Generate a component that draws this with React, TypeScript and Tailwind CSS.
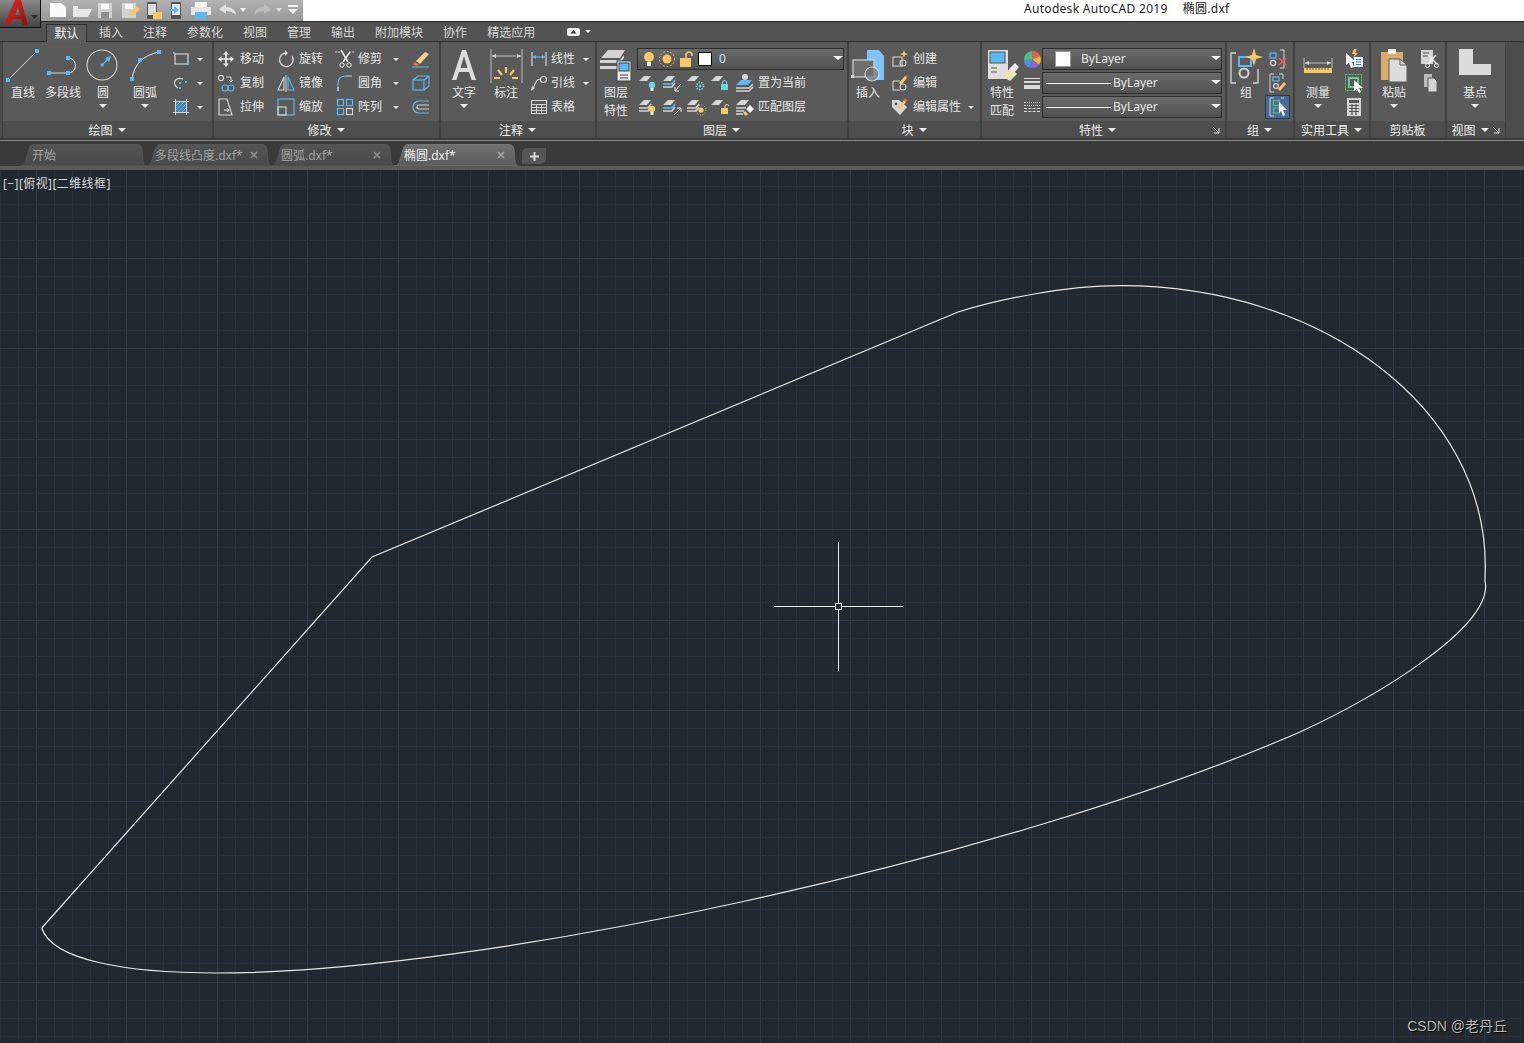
import type { ReactNode } from "react";

const BLUE = "#5cb8f0";
const GREY = "#d4d4d4";
const YEL = "#f7c86a";
const CYAN = "#6fd3dc";

function Caret({ className = "", size = "md" }: { className?: string; size?: "sm" | "md" | "lg" }) {
  const sizes = {
    sm: "border-x-[3px] border-t-[3px]",
    md: "border-x-[4px] border-t-[4px]",
    lg: "border-x-[5px] border-t-[4px]",
  };
  return <span className={`inline-block w-0 h-0 border-x-transparent border-t-[#f0f0f0] ${sizes[size]} ${className}`} />;
}

function Ico({ children, w = 20, h = 20 }: { children: ReactNode; w?: number; h?: number }) {
  return (
    <svg width={w} height={h} viewBox={`0 0 ${w} ${h}`} fill="none" className="shrink-0">
      {children}
    </svg>
  );
}

const Dot = ({ x, y, s = 3 }: { x: number; y: number; s?: number }) => <rect x={x - s / 2} y={y - s / 2} width={s} height={s} fill={BLUE} />;

// stack of grey sheets used by the layer icons
const Sheets = ({ n = 1, blue = false }: { n?: number; blue?: boolean }) => (
  <>
    <path d="M1 8 L6 3 H13 L9 8 Z" fill={GREY} />
    {n > 1 && <path d="M1 11 H10 L13 7" stroke={blue ? BLUE : GREY} strokeWidth="1.5" />}
    {n > 1 && <path d="M1 14 H10 L13 10" stroke={GREY} strokeWidth="1.5" />}
  </>
);

const Bulb = ({ c, x = 14, y = 12 }: { c: string; x?: number; y?: number }) => (
  <>
    <circle cx={x} cy={y} r="3.2" fill={c} />
    <rect x={x - 1.5} y={y + 3} width="3" height="3" fill="#e8e8e8" />
  </>
);

const Lock = ({ c, open = false, x = 11, y = 11 }: { c: string; open?: boolean; x?: number; y?: number }) => (
  <>
    <rect x={x} y={y} width="7" height="6" fill={c} />
    <path d={open ? `M${x + 4} ${y} V${y - 2} Q${x + 6} ${y - 5} ${x + 8} ${y - 2}` : `M${x + 1.5} ${y} V${y - 2} Q${x + 3.5} ${y - 5} ${x + 5.5} ${y - 2} V${y}`} stroke={c} strokeWidth="1.2" />
  </>
);

const icons: Record<string, ReactNode> = {
  rect: (
    <Ico>
      <rect x="4" y="5" width="13" height="10" stroke={GREY} strokeWidth="1.2" />
      <Dot x={3} y={4} s={2} />
      <Dot x={17} y={15} s={2} />
    </Ico>
  ),
  ell: (
    <Ico>
      <path d="M12 6 C6 4 2 8 4 12 Q5 14 7 15" stroke={GREY} strokeWidth="1.2" />
      <Dot x={9} y={10} s={2} />
      <Dot x={15} y={9} s={2} />
      <Dot x={9} y={15} s={2} />
    </Ico>
  ),
  hatch: (
    <Ico>
      <rect x="5" y="5" width="10" height="10" fill="#4b7fa8" />
      <path d="M5 9 L9 5 M5 13 L13 5 M7 15 L15 7 M11 15 L15 11" stroke={BLUE} strokeWidth="1" />
      <path d="M2 4.5 H18 M2 15.5 H18 M4.5 2 V18 M15.5 2 V18" stroke={GREY} strokeWidth="1" />
    </Ico>
  ),
  move: (
    <Ico>
      <path d="M10 3 V17 M3 10 H17" stroke="#f0f0f0" strokeWidth="1.6" />
      <path d="M10 2 L13 5.5 H7 Z M10 18 L13 14.5 H7 Z M2 10 L5.5 7 V13 Z M18 10 L14.5 7 V13 Z" fill="#f0f0f0" />
    </Ico>
  ),
  rotate: (
    <Ico>
      <path d="M11 4 A6.8 6.8 0 1 0 16 7" stroke={GREY} strokeWidth="1.4" />
      <path d="M12 1 L9 4 L12 7 Z" fill={GREY} transform="rotate(180 10.5 4)" />
    </Ico>
  ),
  trim: (
    <Ico>
      <path d="M0 3 H6 M14 3 H20" stroke={GREY} strokeDasharray="2 1" />
      <path d="M6 1 L13 13 M15 3 L8 13" stroke="#ececec" strokeWidth="1.5" />
      <circle cx="7" cy="16" r="2.2" stroke="#ececec" />
      <circle cx="14" cy="16" r="2.2" stroke="#ececec" />
    </Ico>
  ),
  eraser: (
    <Ico>
      <path d="M5 12 L14 3 L18 5 L9 15 Z" fill="#f6cf8f" />
      <path d="M4 13 L8 16 L5 17 L2 15 Z" fill="#ef6b5e" />
      <path d="M1 18 H18" stroke={BLUE} />
    </Ico>
  ),
  copy: (
    <Ico>
      <circle cx="5" cy="5" r="2.6" stroke={GREY} strokeWidth="1.1" />
      <circle cx="9" cy="15" r="3" stroke={BLUE} strokeWidth="1.1" />
      <circle cx="15" cy="15" r="3" stroke={BLUE} strokeWidth="1.1" />
      <path d="M10 4 H15 V9 M13 7 L15 9 L17 7" stroke={GREY} />
    </Ico>
  ),
  mirror: (
    <Ico>
      <path d="M8 4 L2 17 H8 Z" stroke={GREY} strokeWidth="1.1" />
      <path d="M10 2 V19" stroke={GREY} />
      <path d="M12 4 L18 17 H12 Z" stroke={BLUE} strokeWidth="1.1" />
    </Ico>
  ),
  fillet: (
    <Ico>
      <path d="M3 18 V10 Q3 3 11 3" stroke={BLUE} strokeWidth="1.2" />
      <path d="M3 18 V14 M11 3 H17" stroke={GREY} strokeWidth="1.2" />
    </Ico>
  ),
  box3d: (
    <Ico>
      <rect x="2" y="7" width="11" height="10" stroke={BLUE} strokeWidth="1.2" />
      <path d="M2 7 L7 3 H18 V13 L13 17 M13 7 L18 3" stroke={BLUE} strokeWidth="1.2" />
    </Ico>
  ),
  stretch: (
    <Ico>
      <path d="M3 2 H11 L16 18 H3 Z" stroke={GREY} strokeWidth="1.2" />
      <path d="M8 13 H13 M11 11 L13 13 L11 15" stroke="#f0f0f0" />
    </Ico>
  ),
  scale: (
    <Ico>
      <rect x="2" y="2" width="16" height="16" stroke={BLUE} strokeWidth="1.2" />
      <rect x="2" y="10" width="8" height="8" stroke={GREY} strokeWidth="1.2" />
    </Ico>
  ),
  array: (
    <Ico>
      <rect x="2.5" y="2.5" width="6" height="6" stroke={BLUE} strokeWidth="1.2" />
      <rect x="11.5" y="2.5" width="6" height="6" stroke={BLUE} strokeWidth="1.2" />
      <rect x="2.5" y="11.5" width="6" height="6" stroke={BLUE} strokeWidth="1.2" />
      <rect x="11.5" y="11.5" width="6" height="6" stroke={GREY} strokeWidth="1.2" />
    </Ico>
  ),
  offset: (
    <Ico>
      <path d="M18 4 H8 A6 6 0 0 0 8 16 H18" stroke={BLUE} strokeWidth="1.2" />
      <path d="M18 8 H8 A2 2 0 0 0 8 12 H18" stroke={GREY} strokeWidth="1.2" />
    </Ico>
  ),
  linear: (
    <Ico>
      <path d="M3 3 V17 M17 3 V17" stroke={GREY} strokeWidth="1.2" />
      <path d="M4 8 H16" stroke={BLUE} strokeWidth="1.2" />
      <path d="M4 8 L7 6 V10 Z M16 8 L13 6 V10 Z" fill={BLUE} />
    </Ico>
  ),
  leader: (
    <Ico>
      <path d="M3 17 L7 9 Q9 5 12 7" stroke={GREY} strokeWidth="1.2" />
      <circle cx="14.5" cy="6.5" r="3" stroke={GREY} strokeWidth="1.2" />
      <path d="M2 18 L3 13 L6 15 Z" fill={GREY} />
    </Ico>
  ),
  table: (
    <Ico>
      <rect x="2.5" y="3.5" width="15" height="13" stroke={GREY} />
      <path d="M2.5 7.5 H17.5 M2.5 10.5 H17.5 M2.5 13.5 H17.5 M7.5 7.5 V16.5 M12.5 7.5 V16.5" stroke={GREY} />
    </Ico>
  ),
  create: (
    <Ico>
      <path d="M3 8 H12 V17 H3 Z M2 17 H4" stroke={GREY} strokeWidth="1.1" />
      <circle cx="13" cy="14" r="3" stroke={GREY} strokeWidth="1.1" />
      <path d="M14 1 L15 4 L18 5 L15 6 L14 9 L13 6 L10 5 L13 4 Z" fill={YEL} />
    </Ico>
  ),
  edit: (
    <Ico>
      <path d="M3 8 H10 M3 8 V17 H10" stroke={GREY} strokeWidth="1.1" />
      <circle cx="13" cy="14" r="3" stroke={GREY} strokeWidth="1.1" />
      <path d="M9 10 L15 3 L17 5 L11 12 Z" fill={YEL} />
      <path d="M15 3 L16 2 L18 4 L17 5 Z" fill="#ef6b5e" />
    </Ico>
  ),
  attr: (
    <Ico>
      <path d="M2 3 H9 L17 10 L10 18 L2 10 Z" fill={GREY} />
      <circle cx="6" cy="7" r="1.4" fill="#555" />
      <path d="M8 11 L14 3 L16 5 L10 13 Z" fill={YEL} />
      <path d="M14 3 L15 1.5 L17.5 3.5 L16 5 Z" fill="#ef6b5e" />
    </Ico>
  ),
  grpDel: (
    <Ico>
      <rect x="2" y="4" width="6" height="5" stroke={BLUE} strokeWidth="1.3" />
      <circle cx="5" cy="14" r="2.6" stroke={GREY} strokeWidth="1.3" />
      <path d="M12 1 H16 V19 H12" stroke={GREY} />
      <path d="M11 9 L18 16 M18 9 L11 16" stroke="#ef5b5b" strokeWidth="1.6" />
    </Ico>
  ),
  grpEdit: (
    <Ico>
      <path d="M6 1 H2 V19 H6 M11 1 H15 V6" stroke={GREY} />
      <rect x="5" y="4" width="6" height="4" stroke={BLUE} strokeWidth="1.2" />
      <circle cx="8" cy="13" r="2.4" stroke={GREY} strokeWidth="1.2" />
      <path d="M10 16 L16 9 L18 11 L12 18 Z" fill={YEL} />
    </Ico>
  ),
  grpSel: (
    <Ico>
      <path d="M6 1 H2 V19 H6 M13 1 H16" stroke={GREY} />
      <rect x="5.5" y="3.5" width="6" height="5" stroke="#53c27f" strokeWidth="1.2" />
      <rect x="5.5" y="11" width="6" height="5" stroke="#53c27f" strokeWidth="1.2" />
      <path d="M11 5 L19 13 H15 L17 18 L15 19 L13 14 L11 16 Z" fill="#f2f2f2" />
    </Ico>
  ),
  quick: (
    <Ico>
      <path d="M2 4 L12 13 H8 L10 18 L7 19 L5 14 L2 16 Z" fill="#f2f2f2" />
      <rect x="10" y="8" width="9" height="10" fill="#f2f2f2" />
      <path d="M12 10.5 H17 M12 13 H17 M12 15.5 H17" stroke="#3a7dc2" />
      <path d="M10 0 L8 5 H11 L9 9 L14 4 H11 L13 0 Z" fill={YEL} />
    </Ico>
  ),
  selGrp: (
    <Ico>
      <rect x="1.5" y="1.5" width="16" height="16" stroke="#53c27f" strokeDasharray="2 1" />
      <rect x="5" y="5" width="9" height="9" stroke="#6cc98f" strokeWidth="2" />
      <path d="M10 7 L19 15 H15 L17 19 L15 20 L13 16 L10 18 Z" fill="#f2f2f2" />
    </Ico>
  ),
  calc: (
    <Ico>
      <rect x="3" y="1" width="14" height="18" fill={GREY} />
      <rect x="5" y="3" width="10" height="3" fill="#555" />
      <path d="M5 8.5 H15 M5 11.5 H15 M5 14.5 H15 M8 7 V18 M12 7 V18" stroke="#555" strokeWidth="1.2" />
    </Ico>
  ),
  cut: (
    <Ico>
      <rect x="1" y="1" width="12" height="14" fill={GREY} />
      <path d="M3 4 H9 M3 7 H8" stroke="#555" />
      <path d="M8 6 L17 15 M16 6 L8 15" stroke="#efefef" strokeWidth="1.4" />
      <circle cx="7.5" cy="16.5" r="2" stroke="#efefef" />
      <circle cx="16.5" cy="16.5" r="2" stroke="#efefef" />
    </Ico>
  ),
  copyClip: (
    <Ico>
      <rect x="4" y="1" width="8" height="13" fill="#bbb" />
      <path d="M8 5 H14 L17 8 V19 H8 Z" fill={GREY} stroke="#5a5a5a" />
    </Ico>
  ),
  layA: <Ico w={22}><Sheets /><Bulb c={CYAN} /></Ico>,
  layB: (
    <Ico w={22}>
      <Sheets n={2} blue />
      <path d="M19 11 L13 18 M13 14 V18 H17" stroke="#efefef" />
    </Ico>
  ),
  layC: (
    <Ico w={22}>
      <Sheets />
      <circle cx="14" cy="13" r="3.6" stroke={CYAN} strokeWidth="1.6" strokeDasharray="1.5 1" />
      <circle cx="14" cy="13" r="1.4" fill={CYAN} />
    </Ico>
  ),
  layD: <Ico w={22}><Sheets /><Lock c={CYAN} /></Ico>,
  layE: <Ico w={22}><Sheets n={2} /><Bulb c={YEL} /></Ico>,
  layF: (
    <Ico w={22}>
      <Sheets n={2} blue />
      <path d="M12 18 L19 11 M15 11 H19 V15" stroke="#efefef" />
    </Ico>
  ),
  layG: (
    <Ico w={22}>
      <Sheets n={2} />
      <circle cx="15" cy="13" r="2.6" fill={YEL} />
      <circle cx="15" cy="13" r="5" stroke={YEL} strokeDasharray="1 1.6" />
    </Ico>
  ),
  layH: <Ico w={22}><Sheets /><Lock c={YEL} open /></Ico>,
  setCur: (
    <Ico w={22}>
      <circle cx="11" cy="4" r="3" fill={GREY} />
      <path d="M2 12 L7 7 H18 L14 12 Z" fill={BLUE} />
      <path d="M2 15 H15 L19 11 M2 18 H15 L19 14" stroke={GREY} strokeWidth="1.4" />
    </Ico>
  ),
  match: (
    <Ico w={22}>
      <path d="M2 8 L7 3 H15 L11 8 Z" fill={GREY} />
      <path d="M2 11 H12 M2 14 H10 M2 17 H9" stroke={GREY} strokeWidth="1.4" />
      <path d="M12 12 L16 8 L20 12 L16 16 Z" fill="#efefef" />
      <path d="M11 14 L14 17 L12 19 L9 16 Z" fill={YEL} />
    </Ico>
  ),
};

function Small({ icon, label, iconW = 22, gap = 3 }: { icon: string; label?: string; iconW?: number; gap?: number }) {
  return (
    <div className="h-[24px] flex items-center">
      <div className="flex justify-center shrink-0" style={{ width: iconW }}>{icons[icon]}</div>
      {label && <span className="text-[#e6e6e6] whitespace-nowrap" style={{ marginLeft: gap }}>{label}</span>}
    </div>
  );
}

function Large({ w = 40, label, label2, caret, children }: { w?: number; label: string; label2?: string; caret?: boolean; children: ReactNode }) {
  return (
    <div className="flex flex-col items-center shrink-0" style={{ width: w }}>
      <svg width={w} height={37} viewBox={`0 0 ${w} 37`} fill="none">{children}</svg>
      <span className="leading-[18px] text-[#e6e6e6] whitespace-nowrap">{label}</span>
      {label2 && <span className="leading-[18px] text-[#e6e6e6]">{label2}</span>}
      {caret && <Caret className="mt-[2px]" />}
    </div>
  );
}

function Panel({ w, title, corner, titleCaret = true, children }: { w: number; title: string; corner?: boolean; titleCaret?: boolean; children: ReactNode }) {
  return (
    <section className="shrink-0 flex flex-col h-[96px] border-x border-[#404040] bg-[#5a5a5a]" style={{ width: w }}>
      <div className="h-[79px] pt-[5px] flex">{children}</div>
      <div className={`relative h-[17px] bg-[#4e4e4e] flex items-center justify-center gap-[5px] text-[#ececec] leading-none ${corner ? "pr-[12px]" : "pr-[1px]"}`}>
        <span className="mt-[2px]">{title}</span>
        {titleCaret && <Caret />}
        {corner && (
          <svg width="7" height="7" viewBox="0 0 7 7" fill="none" className="absolute right-[5px] top-[6px]">
            <path d="M0 0 L6 6 M6 1 V6 H1" stroke="#e8e8e8" />
          </svg>
        )}
      </div>
    </section>
  );
}

function Dropdown({ w, children }: { w: number; children: ReactNode }) {
  return (
    <div className="relative h-[22px] flex items-center border border-[#2e2e2e] bg-gradient-to-b from-[#6a6a6a] to-[#525252] text-[#e6e6e6] shrink-0" style={{ width: w }}>
      {children}
      <Caret size="lg" className="absolute right-0 top-[7px]" />
    </div>
  );
}

function RibbonTabs() {
  const tabs = ["插入", "注释", "参数化", "视图", "管理", "输出", "附加模块", "协作", "精选应用"];
  return (
    <div className="h-[20px] flex items-start pl-[46px] gap-[4px] bg-[#535353] border-b border-[#2f2f2f] text-[#d8d8d8]">
      <div className="mt-[2px] h-[18px] w-[41px] flex items-center justify-center bg-[#5c5c5c] border-x border-t border-[#2f2f2f] text-[#f2f2f2]">默认</div>
      {tabs.map((t) => (
        <div key={t} className="h-[19px] mt-[1px] px-[8px] flex items-center">{t}</div>
      ))}
      <div className="ml-[20px] h-[19px] flex items-center gap-[5px]">
        <svg width="13" height="8" viewBox="0 0 13 8"><rect width="13" height="8" rx="2" fill="#efefef" /><path d="M6.5 2 L9.5 5.5 H3.5 Z" fill="#333" /></svg>
        <Caret size="sm" />
      </div>
    </div>
  );
}

function QuickAccess() {
  return (
    <div className="w-[263px] h-[21px] flex items-center bg-gradient-to-b from-[#b2b2b2] to-[#989898] pl-[9px]">
      <svg width="254" height="19" viewBox="0 0 254 19" fill="none" className="shrink-0">
        <path d="M1 2 H12 L17 6 V16 H1 Z" fill="#fafafa" />
        <path d="M24 5 V16 H39 L43 8 H29 V5 H24" fill="#e8e8e8" />
        <path d="M49 2 H63 V17 H49 Z" fill="#d2d2d2" /><rect x="52" y="3" width="8" height="5" fill="#fafafa" /><rect x="52" y="11" width="8" height="6" fill="#8f8f8f" />
        <path d="M73 2 H87 V17 H73 Z" fill="#d2d2d2" /><rect x="76" y="3" width="8" height="5" fill="#fafafa" /><path d="M80 13 L88 5 L91 8 L83 16 Z" fill={YEL} />
        <rect x="98" y="1" width="10" height="17" rx="1" fill="#555" /><rect x="99" y="3" width="8" height="11" fill="#dcdcdc" /><path d="M104 11 H113 V18 H104 Z" fill={YEL} />
        <rect x="122" y="1" width="10" height="17" rx="1" fill="#555" /><rect x="123" y="3" width="8" height="11" fill="#e8e8e8" /><path d="M118 8 H125 V5 L130 9 L125 13 V10 H118 Z" fill={BLUE} />
        <path d="M146 1 H158 V6 H146 Z" fill="#fafafa" /><rect x="142" y="6" width="20" height="8" fill="#e6e6e6" /><rect x="146" y="11" width="12" height="7" fill={BLUE} />
        <path d="M170 8 L177 3 V6 Q186 6 187 14 Q183 10 177 10 V13 Z" fill="#e0e0e0" />
        <path d="M191 7 H197 L194 11 Z" fill="#f0f0f0" />
        <path d="M216 8 L209 3 V6 Q200 6 199 14 Q203 10 209 10 V13 Z" fill="#bdbdbd" transform="translate(6 0)" />
        <path d="M227 7 H233 L230 11 Z" fill="#e0e0e0" />
        <path d="M239 4 H249 V6 H239 Z M239 8 H249 L244 13 Z" fill="#f4f4f4" />
      </svg>
    </div>
  );
}

function TitleBar() {
  return (
    <div className="relative h-[22px] flex bg-white border-b border-[#2a2a2a]">
      <div className="absolute left-0 top-0 z-10 w-[41px] h-[28px] bg-gradient-to-b from-[#8a8a8a] to-[#454545] border-r border-b border-[#111]">
        <svg width="40" height="27" viewBox="0 0 40 27" fill="none">
          <defs>
            <linearGradient id="logoA" x1="0" y1="0" x2="1" y2="1"><stop offset="0" stopColor="#e02a2a" /><stop offset="1" stopColor="#8c1010" /></linearGradient>
          </defs>
          <path d="M4 25 L15 0 H21 L28 25 H23 L21 19 H13 L9 25 Z M15 15 H20 L18 7 Z" fill="url(#logoA)" />
          <path d="M31 15 H38 L34.5 19 Z" fill="#2a2a2a" />
        </svg>
      </div>
      <div className="w-[40px] shrink-0" />
      <QuickAccess />
      <div className="ml-[721px] h-[17px] flex items-center gap-[15px] text-[#1c1c1c] tracking-[0.3px]">
        <span>Autodesk AutoCAD 2019</span>
        <span>椭圆.dxf</span>
      </div>
    </div>
  );
}

function Ribbon() {
  return (
    <div className="h-[98px] flex pl-[2px] bg-[#4c4c4c] border-b-2 border-[#3a3a3a]">
      <Panel w={211} title="绘图">
        <Large label="直线">
          <path d="M5 33 L34 4" stroke={GREY} /><Dot x={5} y={33} s={4} /><Dot x={34} y={4} s={4} />
        </Large>
        <Large label="多段线">
          <path d="M6 26 H25 M25 11 A7.5 7.5 0 0 1 25 26" stroke={GREY} strokeWidth="1.1" /><Dot x={6} y={26} s={4} /><Dot x={25} y={26} s={4} /><Dot x={25} y={11} s={4} />
        </Large>
        <Large label="圆" caret>
          <circle cx="19" cy="18" r="15" stroke={GREY} strokeWidth="1.1" />
          <path d="M19 18 L27 10" stroke={BLUE} strokeWidth="1.3" /><path d="M28 9 L22 11 L26 15 Z" fill={BLUE} /><Dot x={19} y={18} s={3} />
        </Large>
        <div className="w-[2px]" />
        <Large label="圆弧" caret>
          <path d="M7 32 Q10 10 34 5" stroke={GREY} strokeWidth="1.2" /><Dot x={7} y={32} s={4} /><Dot x={15} y={13} s={4} /><Dot x={34} y={5} s={4} />
        </Large>
        <div className="ml-[5px] flex flex-col">
          {["rect", "ell", "hatch"].map((k) => (
            <div key={k} className="flex items-center h-[24px]">
              <div className="w-[22px] flex justify-center">{icons[k]}</div>
              <Caret size="sm" className="ml-[5px]" />
            </div>
          ))}
        </div>
      </Panel>

      <Panel w={227} title="修改">
        <div className="w-[1px]" />
        <div className="w-[60px] flex flex-col">
          <Small icon="move" label="移动" />
          <Small icon="copy" label="复制" />
          <Small icon="stretch" label="拉伸" />
        </div>
        <div className="w-[59px] flex flex-col">
          <Small icon="rotate" label="旋转" gap={2} />
          <Small icon="mirror" label="镜像" gap={2} />
          <Small icon="scale" label="缩放" gap={2} />
        </div>
        <div className="w-[76px] flex flex-col">
          {[["trim", "修剪"], ["fillet", "圆角"], ["array", "阵列"]].map(([i, l]) => (
            <div key={i} className="flex items-center h-[24px]">
              <div className="w-[22px] flex justify-center">{icons[i]}</div>
              <span className="ml-[2px] text-[#e6e6e6]">{l}</span>
              <Caret size="sm" className="ml-[11px]" />
            </div>
          ))}
        </div>
        <div className="flex flex-col">
          <Small icon="eraser" />
          <Small icon="box3d" />
          <Small icon="offset" />
        </div>
      </Panel>

      <Panel w={156} title="注释">
        <div className="w-[3px]" />
        <Large label="文字" caret>
          <path d="M8 33 L18 3 H22 L32 33 H27.5 L25 25 H15 L12.5 33 Z M16.5 21 H23.5 L20 9 Z" fill="#dcdcdc" />
        </Large>
        <div className="w-[2px]" />
        <Large label="标注">
          <path d="M5 2 V36 M36 2 V36 M6 9 H35" stroke={GREY} strokeWidth="0.8" />
          <path d="M6 9 L10 7 V11 Z M35 9 L31 7 V11 Z" fill={GREY} />
          <path d="M20 20 V26 M12 23 L16 28 M28 23 L24 28 M8 31 H14 M26 31 H32" stroke={YEL} strokeWidth="2.2" />
        </Large>
        <div className="ml-[2px] flex flex-col">
          {[["linear", "线性", true], ["leader", "引线", true], ["table", "表格", false]].map(([i, l, c]) => (
            <div key={i as string} className="flex items-center h-[24px]">
              <div className="w-[22px] flex justify-center">{icons[i as string]}</div>
              <span className="ml-[1px] text-[#e6e6e6]">{l as string}</span>
              {c && <Caret size="sm" className="ml-[8px]" />}
            </div>
          ))}
        </div>
      </Panel>

      <Panel w={252} title="图层">
        <Large w={38} label="图层" label2="特性">
          <path d="M4 11 L11 3 H28 L23 11 Z" fill={GREY} />
          <path d="M3 13 H23 L27 8 V11 L23 16 H3 Z M3 19 H22 L24 17 V20 L22 22 H3 Z" fill={GREY} />
          <rect x="20" y="14" width="14" height="20" fill="#ececec" stroke="#444" />
          <rect x="22" y="16" width="10" height="8" fill={BLUE} stroke="#444" />
          <path d="M23 28 H31 M23 31 H31" stroke="#444" />
        </Large>
        <div className="w-[2px]" />
        <div className="flex flex-col pt-[1px]">
          <Dropdown w={207}>
            <div className="pl-[5px] flex items-center gap-[2px]">
              <svg width="52" height="18" viewBox="0 0 52 18" fill="none">
                <circle cx="6" cy="7" r="5" fill={YEL} /><rect x="4" y="12" width="4" height="4" fill="#efefef" />
                <circle cx="24" cy="9" r="4.5" fill={YEL} /><circle cx="24" cy="9" r="7.5" stroke={YEL} strokeDasharray="1.5 2" />
                <rect x="37" y="8" width="11" height="9" fill={YEL} /><path d="M43 8 V4 Q46 0 49 4 V6" stroke={YEL} strokeWidth="1.6" />
              </svg>
              <span className="ml-[1px] w-[14px] h-[14px] bg-white border border-black" />
              <span className="ml-[5px] text-[#cfe3f5]">0</span>
            </div>
          </Dropdown>
          <div className="flex h-[24px] mt-[1px] items-center">
            {["layA", "layB", "layC", "layD", "setCur"].map((k) => (
              <div key={k} className="w-[24px] flex justify-center">{icons[k]}</div>
            ))}
            <span className="ml-[1px] text-[#e6e6e6]">置为当前</span>
          </div>
          <div className="flex h-[24px] items-center">
            {["layE", "layF", "layG", "layH", "match"].map((k) => (
              <div key={k} className="w-[24px] flex justify-center">{icons[k]}</div>
            ))}
            <span className="ml-[1px] text-[#e6e6e6]">匹配图层</span>
          </div>
        </div>
      </Panel>

      <Panel w={133} title="块">
        <Large w={38} label="插入">
          <path d="M18 3 H30 L35 9 V33 H18 Z" fill="#7fc4f5" />
          <rect x="4" y="13" width="21" height="17" fill="#6e6e6e" stroke={GREY} strokeWidth="1.2" />
          <circle cx="23" cy="27" r="7" fill="#6e6e6e" fillOpacity="0.6" stroke={GREY} strokeWidth="1.2" />
          <rect x="2" y="28" width="3" height="3" fill={GREY} />
        </Large>
        <div className="w-[2px]" />
        <div className="flex flex-col">
          <Small icon="create" label="创建" gap={2} />
          <Small icon="edit" label="编辑" gap={2} />
          <div className="flex items-center h-[24px]">
            <div className="w-[22px] flex justify-center">{icons.attr}</div>
            <span className="ml-[2px] text-[#e6e6e6]">编辑属性</span>
            <Caret size="sm" className="ml-[7px]" />
          </div>
        </div>
      </Panel>

      <Panel w={245} title="特性" corner>
        <Large label="特性" label2="匹配">
          <rect x="6" y="3" width="20" height="29" fill="#dedede" />
          <rect x="8" y="5" width="15" height="11" fill={BLUE} stroke="#555" />
          <path d="M9 21 H15 M9 25 H15" stroke="#555" />
          <path d="M20 29 L29 21 L35 27 L28 34 Z" fill="#f0e2b5" />
          <path d="M27 22 L33 16 L37 20 L32 26 Z" fill="#efefef" />
        </Large>
        <div className="w-[20px] flex flex-col items-center gap-[2px] pt-[1px]">
          <div className="h-[22px] flex items-center">
            <svg width="17" height="17" viewBox="0 0 17 17">
              <path d="M8.5 8.5 L8.5 0 A8.5 8.5 0 0 1 16 5 Z" fill="#ef5c4e" /><path d="M8.5 8.5 L16 5 A8.5 8.5 0 0 1 15 14 Z" fill="#f3b13d" />
              <path d="M8.5 8.5 L15 14 A8.5 8.5 0 0 1 6 17 Z" fill="#8b63d0" /><path d="M8.5 8.5 L6 17 A8.5 8.5 0 0 1 0 9 Z" fill="#4d8de0" />
              <path d="M8.5 8.5 L0 9 A8.5 8.5 0 0 1 8.5 0 Z" fill="#4fbf7a" />
            </svg>
          </div>
          <div className="h-[22px] flex flex-col justify-center gap-[2px] w-[16px]">
            <div className="h-[1px] bg-[#dcdcdc]" /><div className="h-[2px] bg-[#dcdcdc]" /><div className="h-[4px] bg-[#dcdcdc]" />
          </div>
          <div className="h-[22px] flex flex-col justify-center gap-[2px] w-[16px]">
            <div className="h-[1px] border-t border-dotted border-[#dcdcdc]" />
            <div className="h-[1px] border-t border-dotted border-[#dcdcdc]" />
            <div className="h-[1px] border-t border-dashed border-[#dcdcdc]" />
            <div className="h-[1px] border-t border-dashed border-[#dcdcdc]" />
          </div>
        </div>
        <div className="flex flex-col gap-[2px] pt-[1px]">
          <Dropdown w={180}>
            <span className="ml-[12px] w-[16px] h-[16px] bg-white border border-[#999]" />
            <span className="ml-[10px]">ByLayer</span>
          </Dropdown>
          <Dropdown w={180}>
            <span className="ml-[3px] w-[65px] h-[1px] bg-[#f0f0f0]" />
            <span className="ml-[2px]">ByLayer</span>
          </Dropdown>
          <Dropdown w={180}>
            <span className="ml-[3px] w-[65px] h-[1px] bg-[#f0f0f0]" />
            <span className="ml-[2px]">ByLayer</span>
          </Dropdown>
        </div>
      </Panel>

      <Panel w={68} title="组">
        <Large w={38} label="组">
          <path d="M9 6 H4 V36 H9 M26 36 H31 V22" stroke={GREY} strokeWidth="1.3" />
          <rect x="12" y="10" width="12" height="9" stroke={BLUE} strokeWidth="2" />
          <circle cx="17" cy="26" r="4.5" stroke={GREY} strokeWidth="2" />
          <path d="M27 1 L29 8 L36 10 L29 12 L27 19 L25 12 L18 10 L25 8 Z" fill={YEL} />
        </Large>
        <div className="w-[25px] flex flex-col">
          <Small icon="grpDel" iconW={25} />
          <Small icon="grpEdit" iconW={25} />
          <div className="h-[24px] flex justify-center items-center bg-[#4a6a96] border border-[#2c3a55]">{icons.grpSel}</div>
        </div>
      </Panel>

      <Panel w={76} title="实用工具">
        <Large w={46} label="测量" caret>
          <path d="M9 11 V21 M37 11 V21 M10 16 H36" stroke={GREY} strokeWidth="0.8" />
          <path d="M10 16 L14 14 V18 Z M36 16 L32 14 V18 Z" fill={GREY} />
          <rect x="9" y="21" width="28" height="5" fill={YEL} />
          <path d="M12 21 V23 M15 21 V23 M18 21 V23 M21 21 V23 M24 21 V23 M27 21 V23 M30 21 V23 M33 21 V23" stroke="#7a6233" />
        </Large>
        <div className="w-[26px] flex flex-col">
          <Small icon="quick" iconW={26} />
          <Small icon="selGrp" iconW={26} />
          <Small icon="calc" iconW={26} />
        </div>
      </Panel>

      <Panel w={76} title="剪贴板" titleCaret={false}>
        <Large w={46} label="粘贴" caret>
          <rect x="10" y="5" width="22" height="28" fill="#d8ac6f" />
          <rect x="17" y="2" width="8" height="5" fill="#efefef" />
          <path d="M18 12 H29 L36 18 V35 H18 Z" fill="#dcdcdc" stroke="#5a5a5a" />
          <path d="M29 12 V18 H36" stroke="#5a5a5a" />
        </Large>
        <div className="w-[26px] flex flex-col">
          <Small icon="cut" iconW={26} />
          <Small icon="copyClip" iconW={26} />
        </div>
      </Panel>

      <Panel w={60} title="视图" corner>
        <Large w={56} label="基点" caret>
          <path d="M12 2 H26 V17 H44 V28 H12 Z" fill="#dcdcdc" />
        </Large>
      </Panel>
    </div>
  );
}

function DocTab({ w, label, closable, active, textX }: { w: number; label: string; closable?: boolean; active?: boolean; textX: number }) {
  const h = 22;
  const d = `M0 ${h} Q5 ${h} 6 ${h - 6} L9 5 Q10 0 16 0 H${w - 10} Q${w - 5} 0 ${w - 4} 5 L${w - 3} ${h - 5} Q${w - 2} ${h} ${w} ${h} Z`;
  const id = active ? "tabOn" : "tabOff";
  return (
    <div className="relative shrink-0 h-[22px] flex items-center" style={{ width: w, paddingLeft: textX }}>
      <svg width={w} height={h} viewBox={`0 0 ${w} ${h}`} className="absolute inset-0">
        <defs>
          <linearGradient id={id} x1="0" y1="0" x2="0" y2="1">
            <stop offset="0" stopColor={active ? "#727272" : "#555555"} />
            <stop offset="1" stopColor={active ? "#5a5a5a" : "#4a4a4a"} />
          </linearGradient>
        </defs>
        <path d={d} fill={`url(#${id})`} stroke={active ? "#808080" : "#5c5c5c"} strokeWidth="0.6" />
      </svg>
      <span className={`relative mt-[1px] whitespace-nowrap ${active ? "text-[#ececec]" : "text-[#a2a2a2]"}`}>{label}</span>
      {closable && (
        <svg width="8" height="8" viewBox="0 0 8 8" className="absolute right-[13px] top-[7px]">
          <path d="M1 1 L7 7 M7 1 L1 7" stroke={active ? "#a8a8a8" : "#8f8f8f"} strokeWidth="1.6" />
        </svg>
      )}
    </div>
  );
}

function DocTabs() {
  return (
    <>
      <div className="h-[1px] bg-[#8c8c8c]" />
      <div className="h-[25px] flex items-end pl-[20px] bg-[#3a3a3a]">
        <DocTab w={126} label="开始" textX={12} />
        <DocTab w={125} label="多段线凸度.dxf*" closable textX={9} />
        <DocTab w={123} label="圆弧.dxf*" closable textX={10} />
        <DocTab w={124} label="椭圆.dxf*" closable active textX={10} />
        <div className="ml-[4px] mb-[2px] w-[24px] h-[16px] flex items-center justify-center bg-[#565656] rounded-tl-[5px] rounded-br-[5px]">
          <svg width="9" height="9" viewBox="0 0 9 9"><path d="M4.5 0 V9 M0 4.5 H9" stroke="#dcdcdc" strokeWidth="2" /></svg>
        </div>
      </div>
      <div className="h-[4px] bg-[#5a5a5a]" />
    </>
  );
}

// outline of the drawing: two straight segments, upper arc, small kink on the right, lower arc
const OUTLINE =
  "M41.7 928 L372 557 L958 312 C1000 299 1065 285.7 1120 285.7 C1324.4 285.7 1485.3 409.2 1485.3 566 L1485 581 L1485.7 586 " +
  "C1485.7 630 1380 695 1300 732 C1000 862 480 973 217 973 C125 973 52 960 41.7 928";

function Drawing() {
  const xs: number[] = [];
  const ys: number[] = [];
  for (let i = -2; i < 85; i++) xs.push(36.5 + i * 18.094);
  for (let i = -5; i < 50; i++) ys.push(258.5 + i * 18.088);
  return (
    <svg width="1524" height="873" viewBox="0 170 1524 873" fill="none" className="absolute inset-0">
      <g shapeRendering="crispEdges">
        {xs.map((x, i) => <path key={x} d={`M${Math.round(x - 0.5) + 0.5} 170 V1043`} stroke={(i + 3) % 5 === 0 ? "#323947" : "#29303a"} />)}
        {ys.map((y, i) => <path key={y} d={`M0 ${Math.round(y - 0.5) + 0.5} H1524`} stroke={i % 5 === 0 ? "#323947" : "#29303a"} />)}
      </g>
      <path d={OUTLINE} stroke="#e8e8e8" strokeWidth="1.2" />
      <g stroke="#ececec" shapeRendering="crispEdges">
        <path d="M774 606.5 H835 M842 606.5 H903 M838.5 542 V603 M838.5 610 V671" />
        <rect x="835.5" y="603.5" width="6" height="6" />
      </g>
    </svg>
  );
}

export default function App() {
  return (
    <div className="w-[1524px] h-[1043px] flex flex-col overflow-hidden text-[12px] leading-none [font-family:'Noto_Sans','Noto_Sans_CJK_SC',sans-serif]">
      <TitleBar />
      <RibbonTabs />
      <Ribbon />
      <DocTabs />
      <main className="relative flex-1 bg-[#212830]">
        <Drawing />
        <div className="absolute left-[3px] top-[8px] text-[#d8d8d8] tracking-[0.4px]">[−][俯视][二维线框]</div>
        <div className="absolute right-[17px] bottom-[10px] text-[14px] text-[#b4b4b4] [text-shadow:1px_1px_1px_#000] [font-family:'Liberation_Sans','Noto_Sans_CJK_SC',sans-serif]">CSDN @老丹丘</div>
      </main>
    </div>
  );
}
